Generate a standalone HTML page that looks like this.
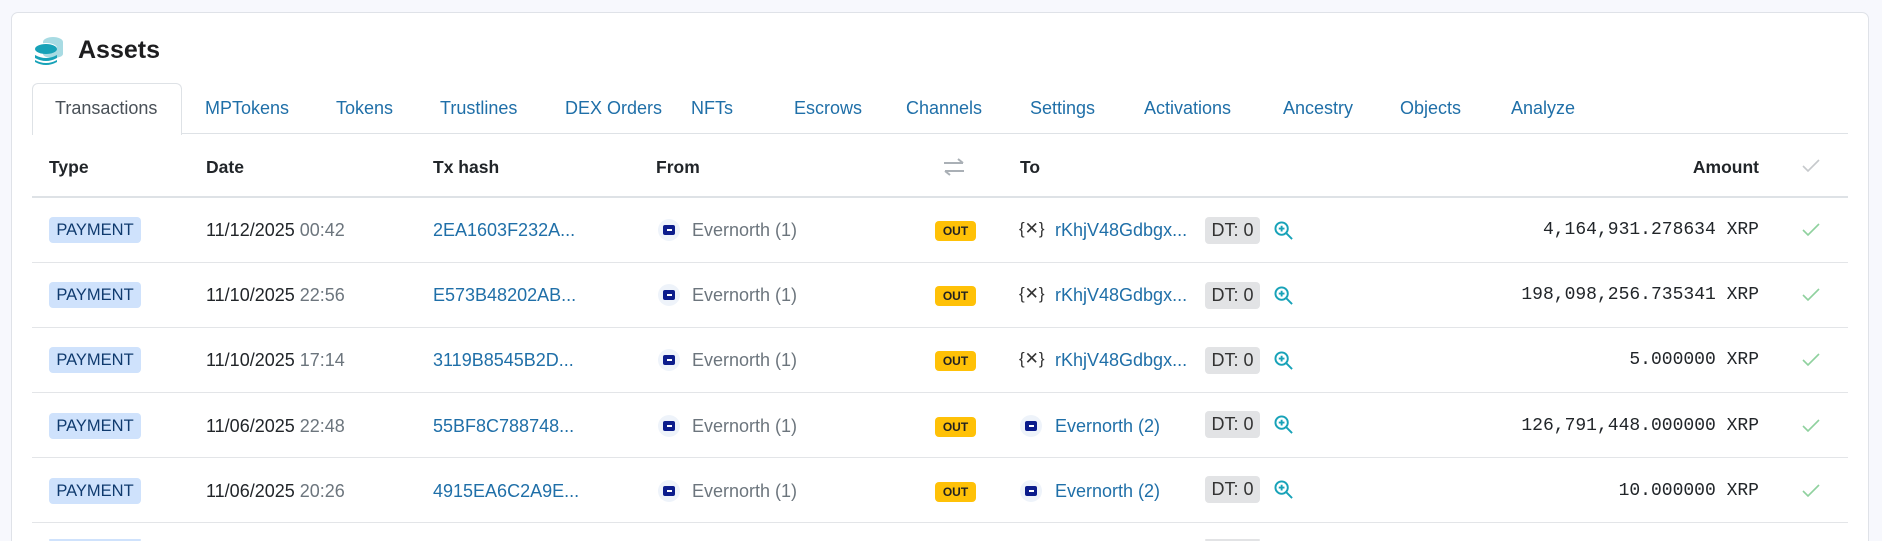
<!DOCTYPE html>
<html><head><meta charset="utf-8"><style>
*{box-sizing:border-box;margin:0;padding:0}
html,body{width:1882px;height:541px;overflow:hidden}
body{background:#f7f8fd;font-family:"Liberation Sans",sans-serif;color:#212529}
#wrap{position:relative;width:1882px;height:541px;overflow:hidden}
.card{position:absolute;left:11px;top:12px;width:1858px;height:540px;background:#fff;border:1px solid #dfe2e8;border-radius:7px}
.a{position:absolute;white-space:nowrap}
.title{left:78px;top:36px;font-size:25px;font-weight:bold;color:#1d1d1f}
.tabline{position:absolute;left:32px;top:133px;width:1816px;height:1px;background:#dee2e6}
.tabact{position:absolute;left:32px;top:83px;width:150px;height:52px;border:1px solid #dee2e6;border-bottom:none;background:#fff;border-radius:6px 6px 0 0}
.tab{top:98px;font-size:18px;color:#1f6fa8}
.th{top:157px;font-size:17.5px;font-weight:bold;color:#212529}
.hsep{position:absolute;left:32px;width:1816px;height:2px;background:#dee2e6;top:196px}
.rsep{position:absolute;left:32px;width:1816px;height:1px;background:#e3e5e8}
.pay{left:49px;width:92px;height:26px;background:#cfe2fc;color:#0f3a6e;border-radius:4px;font-size:16.5px;line-height:26px;text-align:center}
.txt{font-size:18px;line-height:20px}
.gray{color:#6c757d}
.blue{color:#1f6fa8}
.out{left:935px;width:41px;height:20px;background:#ffc107;border-radius:4px;font-size:12px;font-weight:bold;line-height:20px;text-align:center;color:#222}
.dt{left:1205px;width:55px;height:27px;background:#e2e3e5;border-radius:4px;font-size:18px;line-height:27px;text-align:center;color:#333}
.amt{right:123px;font-family:"Liberation Mono",monospace;font-size:18px;color:#212529}
.ev{width:22px;height:22px;border-radius:11px;background:#eef3fa}
.ev i{position:absolute;left:5px;top:6px;width:12px;height:10px;background:#0b1c8c;border-radius:2px}
.ev i:after{content:"";position:absolute;left:4px;top:4px;width:5px;height:2px;background:#fff}
.xr{font-size:17px;line-height:20px;font-weight:300;color:#333}
</style></head><body><div id="wrap">
<div class="card"></div>
<svg class="a" style="left:34px;top:35px" width="30" height="31" viewBox="0 0 30 31">
<ellipse cx="19" cy="7" rx="10" ry="5" fill="#a8dbe3"/><rect x="9" y="7" width="20" height="12" fill="#a8dbe3"/><ellipse cx="19" cy="19" rx="10" ry="4" fill="#a8dbe3"/>
<ellipse cx="12" cy="13" rx="11" ry="5" fill="#fff"/>
<ellipse cx="12" cy="14" rx="11" ry="5" fill="#17a2b8"/>
<path d="M1 20 Q12 26 23 20 L23 23 Q12 29 1 23Z" fill="#17a2b8"/>
<path d="M1 25 Q12 31 23 25 L23 27 Q12 33 1 27Z" fill="#17a2b8"/>
</svg>
<div class="a title">Assets</div>
<div class="tabline"></div><div class="tabact"></div>
<div class="a tab" style="left:55px;color:#495057">Transactions</div>
<div class="a tab" style="left:205px">MPTokens</div>
<div class="a tab" style="left:336px">Tokens</div>
<div class="a tab" style="left:440px">Trustlines</div>
<div class="a tab" style="left:565px">DEX Orders</div>
<div class="a tab" style="left:691px">NFTs</div>
<div class="a tab" style="left:794px">Escrows</div>
<div class="a tab" style="left:906px">Channels</div>
<div class="a tab" style="left:1030px">Settings</div>
<div class="a tab" style="left:1144px">Activations</div>
<div class="a tab" style="left:1283px">Ancestry</div>
<div class="a tab" style="left:1400px">Objects</div>
<div class="a tab" style="left:1511px">Analyze</div>
<div class="a th" style="left:49px">Type</div>
<div class="a th" style="left:206px">Date</div>
<div class="a th" style="left:433px">Tx hash</div>
<div class="a th" style="left:656px">From</div>
<svg class="a" style="left:943px;top:158px" width="22" height="18" viewBox="0 0 22 18" fill="none" stroke="#aab0b6" stroke-width="2"><path d="M1 5H20M15 1L20 5"/><path d="M21 13H2M7 17L2 13"/></svg>
<div class="a th" style="left:1020px">To</div>
<div class="a th" style="right:123px">Amount</div>
<svg class="a" style="left:1802px;top:159px" width="18" height="14" viewBox="0 0 18 14" fill="none" stroke="#c6c9cc" stroke-width="1.6"><path d="M1 7L6 12L17 1"/></svg>
<div class="hsep"></div>

<div class="rsep" style="top:262px"></div>
<div class="rsep" style="top:327px"></div>
<div class="rsep" style="top:392px"></div>
<div class="rsep" style="top:457px"></div>
<div class="rsep" style="top:522px"></div>

<div class="a pay" style="top:217px">PAYMENT</div>
<div class="a txt" style="left:206px;top:220px">11/12/2025 <span class="gray">00:42</span></div>
<div class="a txt blue" style="left:433px;top:220px">2EA1603F232A...</div>
<div class="a ev" style="left:658px;top:219px"><i></i></div>
<div class="a txt gray" style="left:692px;top:220px">Evernorth (1)</div>
<div class="a out" style="top:221px">OUT</div>
<div class="a xr" style="left:1019px;top:219px">{✕}</div>
<div class="a txt blue" style="left:1055px;top:220px">rKhjV48Gdbgx...</div>
<div class="a dt" style="top:217px">DT: 0</div>
<svg class="a" style="left:1274px;top:221px" width="20" height="19" viewBox="0 0 21 20" fill="none" stroke="#17a2b8" stroke-width="2"><circle cx="8" cy="8" r="6.5"/><path d="M13 13L19 19M8 5V11M5 8H11"/></svg>
<div class="a amt" style="top:220px">4,164,931.278634 XRP</div>
<svg class="a" style="left:1802px;top:223px" width="18" height="14" viewBox="0 0 18 14" fill="none" stroke="#8fd19e" stroke-width="1.6"><path d="M1 7L6 12L17 1"/></svg>

<div class="a pay" style="top:282px">PAYMENT</div>
<div class="a txt" style="left:206px;top:285px">11/10/2025 <span class="gray">22:56</span></div>
<div class="a txt blue" style="left:433px;top:285px">E573B48202AB...</div>
<div class="a ev" style="left:658px;top:284px"><i></i></div>
<div class="a txt gray" style="left:692px;top:285px">Evernorth (1)</div>
<div class="a out" style="top:286px">OUT</div>
<div class="a xr" style="left:1019px;top:284px">{✕}</div>
<div class="a txt blue" style="left:1055px;top:285px">rKhjV48Gdbgx...</div>
<div class="a dt" style="top:282px">DT: 0</div>
<svg class="a" style="left:1274px;top:286px" width="20" height="19" viewBox="0 0 21 20" fill="none" stroke="#17a2b8" stroke-width="2"><circle cx="8" cy="8" r="6.5"/><path d="M13 13L19 19M8 5V11M5 8H11"/></svg>
<div class="a amt" style="top:285px">198,098,256.735341 XRP</div>
<svg class="a" style="left:1802px;top:288px" width="18" height="14" viewBox="0 0 18 14" fill="none" stroke="#8fd19e" stroke-width="1.6"><path d="M1 7L6 12L17 1"/></svg>

<div class="a pay" style="top:347px">PAYMENT</div>
<div class="a txt" style="left:206px;top:350px">11/10/2025 <span class="gray">17:14</span></div>
<div class="a txt blue" style="left:433px;top:350px">3119B8545B2D...</div>
<div class="a ev" style="left:658px;top:349px"><i></i></div>
<div class="a txt gray" style="left:692px;top:350px">Evernorth (1)</div>
<div class="a out" style="top:351px">OUT</div>
<div class="a xr" style="left:1019px;top:349px">{✕}</div>
<div class="a txt blue" style="left:1055px;top:350px">rKhjV48Gdbgx...</div>
<div class="a dt" style="top:347px">DT: 0</div>
<svg class="a" style="left:1274px;top:351px" width="20" height="19" viewBox="0 0 21 20" fill="none" stroke="#17a2b8" stroke-width="2"><circle cx="8" cy="8" r="6.5"/><path d="M13 13L19 19M8 5V11M5 8H11"/></svg>
<div class="a amt" style="top:350px">5.000000 XRP</div>
<svg class="a" style="left:1802px;top:353px" width="18" height="14" viewBox="0 0 18 14" fill="none" stroke="#8fd19e" stroke-width="1.6"><path d="M1 7L6 12L17 1"/></svg>

<div class="a pay" style="top:413px">PAYMENT</div>
<div class="a txt" style="left:206px;top:416px">11/06/2025 <span class="gray">22:48</span></div>
<div class="a txt blue" style="left:433px;top:416px">55BF8C788748...</div>
<div class="a ev" style="left:658px;top:415px"><i></i></div>
<div class="a txt gray" style="left:692px;top:416px">Evernorth (1)</div>
<div class="a out" style="top:417px">OUT</div>
<div class="a ev" style="left:1020px;top:415px"><i></i></div>
<div class="a txt blue" style="left:1055px;top:416px">Evernorth (2)</div>
<div class="a dt" style="top:411px">DT: 0</div>
<svg class="a" style="left:1274px;top:415px" width="20" height="19" viewBox="0 0 21 20" fill="none" stroke="#17a2b8" stroke-width="2"><circle cx="8" cy="8" r="6.5"/><path d="M13 13L19 19M8 5V11M5 8H11"/></svg>
<div class="a amt" style="top:416px">126,791,448.000000 XRP</div>
<svg class="a" style="left:1802px;top:419px" width="18" height="14" viewBox="0 0 18 14" fill="none" stroke="#8fd19e" stroke-width="1.6"><path d="M1 7L6 12L17 1"/></svg>

<div class="a pay" style="top:478px">PAYMENT</div>
<div class="a txt" style="left:206px;top:481px">11/06/2025 <span class="gray">20:26</span></div>
<div class="a txt blue" style="left:433px;top:481px">4915EA6C2A9E...</div>
<div class="a ev" style="left:658px;top:480px"><i></i></div>
<div class="a txt gray" style="left:692px;top:481px">Evernorth (1)</div>
<div class="a out" style="top:482px">OUT</div>
<div class="a ev" style="left:1020px;top:480px"><i></i></div>
<div class="a txt blue" style="left:1055px;top:481px">Evernorth (2)</div>
<div class="a dt" style="top:476px">DT: 0</div>
<svg class="a" style="left:1274px;top:480px" width="20" height="19" viewBox="0 0 21 20" fill="none" stroke="#17a2b8" stroke-width="2"><circle cx="8" cy="8" r="6.5"/><path d="M13 13L19 19M8 5V11M5 8H11"/></svg>
<div class="a amt" style="top:481px">10.000000 XRP</div>
<svg class="a" style="left:1802px;top:484px" width="18" height="14" viewBox="0 0 18 14" fill="none" stroke="#8fd19e" stroke-width="1.6"><path d="M1 7L6 12L17 1"/></svg>

<div class="a pay" style="top:539px;height:2px"></div>
<div class="a dt" style="top:539px;height:2px"></div>
</div></body></html>
